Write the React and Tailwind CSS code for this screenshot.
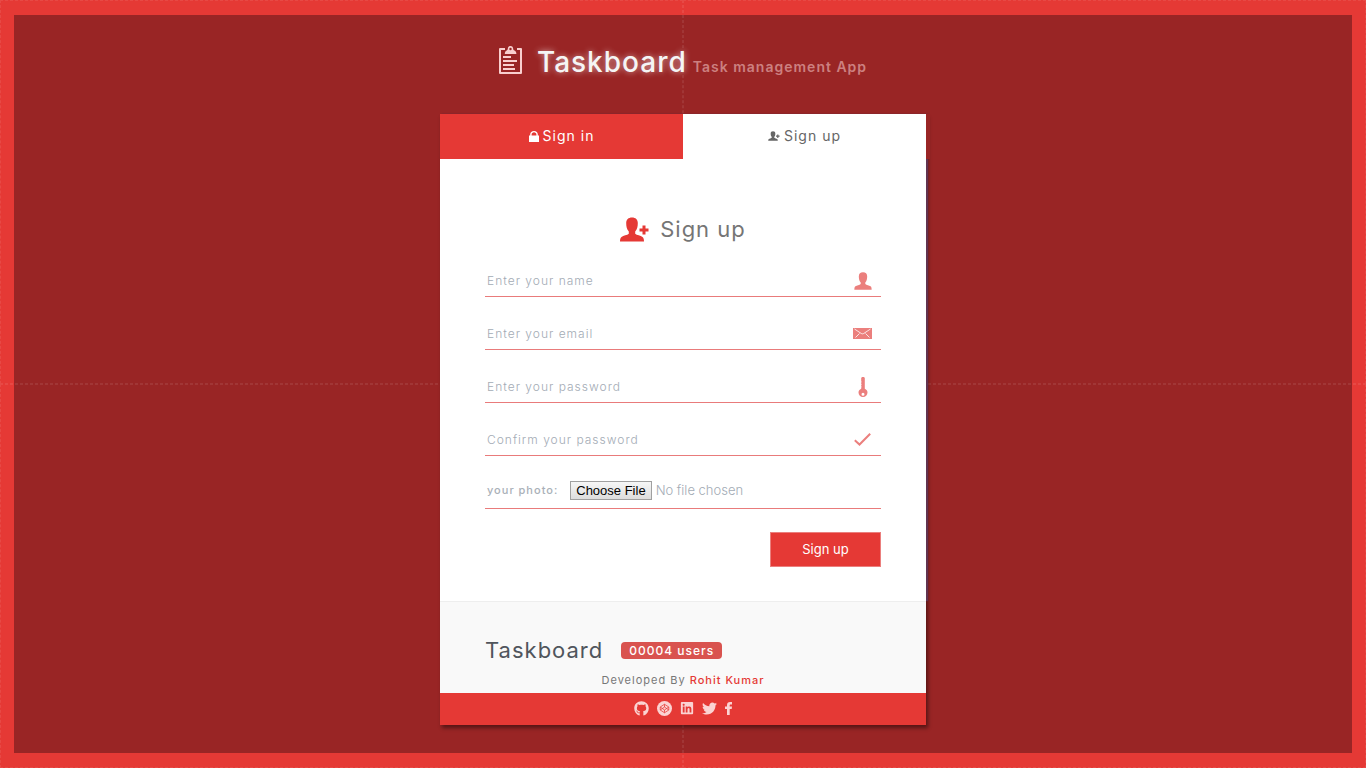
import { useState } from "react";
import { FaGithub, FaLinkedin, FaTwitter } from "react-icons/fa";

const personPath =
  "M12 .5C8.3.5 6.2 2.7 6.2 6c0 3.5.6 6.5 2.6 8.6v2.1c-1.5 1.4-5.5 1.8-7.3 3.2C.4 20.8 0 22.2 0 24.5h24c0-2.3-.4-3.7-1.5-4.6-1.8-1.4-5.8-1.8-7.3-3.2v-2.1c2-2.1 2.6-5.1 2.6-8.6 0-3.3-2.1-5.5-5.8-5.5z";

function PersonIcon({ className }) {
  return (
    <svg viewBox="0 0 24 25" className={className} fill="currentColor" aria-hidden="true">
      <path d={personPath} />
    </svg>
  );
}

function PersonAddIcon({ className }) {
  return (
    <svg viewBox="0 0 29 25" className={className} fill="currentColor" aria-hidden="true">
      <path d={personPath} />
      <path d="M22.5 8.5h3v3h3v3h-3v3h-3v-3h-3v-3h3z" />
    </svg>
  );
}

function LockIcon({ className }) {
  return (
    <svg viewBox="0 0 10 11" className={className} fill="currentColor" aria-hidden="true">
      <path d="M0 4.5h1.2V3.6C1.2 1.4 2.8 0 5 0s3.8 1.4 3.8 3.6v.9H10V11H0zM2.6 4.5h4.8v-.9c0-1.4-1-2.3-2.4-2.3s-2.4.9-2.4 2.3z" />
    </svg>
  );
}

function ClipboardIcon({ className }) {
  return (
    <svg viewBox="0 0 24 28" className={className} aria-hidden="true">
      <path d="M6 3H1v24h21V3h-4" fill="none" stroke="currentColor" strokeWidth="2" strokeLinejoin="round" />
      <path
        d="M11.500 0c-1.700 0-2.700 1.200-2.700 3 0 .7-.4 1.100-1.100 1.400C6.500 4.900 5.800 5.800 5.800 8h11.600c0-2.200-.8-3.100-1.900-3.600-.9-.3-1.300-.7-1.300-1.400 0-1.800-1-3-2.700-3zm0 1.800a1.200 1.200 0 1 1 0 2.400 1.200 1.200 0 0 1 0-2.400z"
        fill="currentColor"
        fillRule="evenodd"
      />
      <path d="M4 11h8M4 15h14M4 19h11M4 23h12" stroke="currentColor" strokeWidth="2" />
    </svg>
  );
}

function MailIcon({ className }) {
  return (
    <svg viewBox="0 0 19 11" className={className} aria-hidden="true">
      <path d="M0 0h19v11H0z" fill="currentColor" />
      <path d="M1.500 1l6.800 4.500q1.200.7 2.400 0L17.500 1M2.500 9.500l4-4M16.500 9.500l-4-4" fill="none" stroke="#fff" strokeWidth=".8" />
    </svg>
  );
}

function KeyIcon({ className }) {
  return (
    <svg viewBox="0 0 10 20" className={className} fill="currentColor" aria-hidden="true">
      <path
        fillRule="evenodd"
        d="M4 0h2l.8 1v10.800C8.500 12.500 9.500 13.800 9.500 15.500 9.500 18 7.500 20 5 20S.5 18 .5 15.500c0-1.700 1-3 2.700-3.700v-1.300l.5-.5-.5-.7V8l.5-.5-.5-.7V5.500l.5-.5-.5-.7V1zM5 15.800a1.500 1.500 0 1 0 0 3 1.500 1.500 0 0 0 0-3z"
      />
    </svg>
  );
}

function CheckIcon({ className }) {
  return (
    <svg viewBox="0 0 17 13" className={className} aria-hidden="true">
      <path d="M.8 7.300l4.700 4.200L16.200.8" fill="none" stroke="currentColor" strokeWidth="2" />
    </svg>
  );
}

function CodepenIcon({ className }) {
  return (
    <svg viewBox="0 0 30 30" className={className} aria-hidden="true">
      <circle cx="15" cy="15" r="15" fill="currentColor" />
      <path
        d="M15 6.500l8.500 5.500v6L15 23.500 6.500 18v-6zM15 6.500V12M15 18v5.500M6.500 12l8.500 6 8.500-6M6.500 18l8.500-6 8.500 6"
        fill="none"
        stroke="#e53935"
        strokeWidth="1.500"
        strokeLinejoin="round"
      />
    </svg>
  );
}

function FacebookIcon({ className }) {
  return (
    <svg viewBox="0 0 7 13" className={className} fill="currentColor" aria-hidden="true">
      <path d="M2 13V7H0V4.500h2V3.200C2 1.100 3.100 0 5.100 0H7v2.400H5.700c-.8 0-1 .3-1 1v1.100H7L6.700 7h-2v6z" />
    </svg>
  );
}

const fields = [
  { id: "name", type: "text", hint: "Enter your name", Icon: PersonIcon, size: "h-[18px] w-[18px]" },
  { id: "email", type: "email", hint: "Enter your email", Icon: MailIcon, size: "h-[11px] w-[19px]" },
  { id: "password", type: "password", hint: "Enter your password", Icon: KeyIcon, size: "h-5 w-[10px]" },
  { id: "confirm", type: "password", hint: "Confirm your password", Icon: CheckIcon, size: "h-[13px] w-[17px]" },
];

const links = [
  { label: "GitHub", Icon: FaGithub, size: "size-[15px]" },
  { label: "CodePen", Icon: CodepenIcon, size: "size-[15px]" },
  { label: "LinkedIn", Icon: FaLinkedin, size: "size-[14px]" },
  { label: "Twitter", Icon: FaTwitter, size: "size-[15px]" },
  { label: "Facebook", Icon: FacebookIcon, size: "h-[13px] w-[7px]" },
];

export default function App() {
  const [tab, setTab] = useState("up");
  const tabStyle = (name) =>
    "flex h-[45px] items-center justify-center gap-1 pb-0.5 text-sm tracking-[1px] " +
    (tab === name ? "bg-white text-[#666]" : "bg-[#e53935] text-white");

  return (
    <div className="relative flex min-h-screen bg-[#e53935] px-[14px] py-[15px] font-['Inter','Liberation_Sans',sans-serif]">
      <div className="pointer-events-none absolute inset-0 grid grid-cols-2 grid-rows-2" aria-hidden="true">
        <div className="z-10 border border-dashed border-white/8" />
        <div className="z-10 border border-dashed border-white/8" />
        <div className="z-10 border border-dashed border-white/8" />
        <div className="z-10 border border-dashed border-white/8" />
      </div>
      <div className="flex flex-1 flex-col items-center bg-[#992525] pb-7">
        <header className="relative z-20 flex items-start gap-[14px] pt-[27px] pb-[32px]">
          <ClipboardIcon className="mt-1 h-7 w-6 text-[#f9cfce]" />
          <h1 className="flex items-baseline gap-1.5 text-[28px] leading-10 font-medium tracking-[1px] text-[#f5f5f5]">
            <span className="[text-shadow:0_0_6px_rgba(255,255,255,0.6)]">Taskboard</span>
            <small className="text-sm font-semibold text-[#cc8080]">Task management App</small>
          </h1>
        </header>

        <main className="relative z-20 w-full max-w-[486px]">
          <div className="shadow-[2px_3px_4px_rgba(0,0,0,0.45)]">
            <div className="relative shadow-[2px_0_1px_#623350]">
              <nav className="relative grid grid-cols-2 shadow-[4px_0_0_#992525]">
                <button type="button" onClick={() => setTab("in")} className={tabStyle("in")}>
                  <LockIcon className="mt-0.5 h-[11px] w-[10px]" />
                  Sign in
                </button>
                <button type="button" onClick={() => setTab("up")} className={tabStyle("up")}>
                  <PersonAddIcon className="h-[10px] w-3" />
                  Sign up
                </button>
              </nav>

              <form className="bg-white px-[45px] pt-[52px] pb-[34px]" onSubmit={(e) => e.preventDefault()}>
                <h2 className="mb-[14px] flex h-9 items-center justify-center gap-[11px] text-[22px] tracking-[1px] text-[#757575]">
                  <PersonAddIcon className="h-[25px] w-[29px] text-[#e53935]" />
                  Sign up
                </h2>
                <div className="flex flex-col gap-[17px]">
                  {fields.map(({ id, type, hint, Icon, size }) => (
                    <div key={id} className="flex h-9 items-center border-b border-[#e97b7b] pt-1">
                      <input
                        id={id}
                        type={type}
                        placeholder={hint}
                        aria-label={hint}
                        className="min-w-0 flex-1 px-0.5 text-xs tracking-[1px] text-gray-600 outline-none placeholder:font-light placeholder:text-[#a3abb5]"
                      />
                      <label htmlFor={id} className="flex w-[37px] justify-center text-[#eb7f7d]">
                        <Icon className={size} />
                      </label>
                    </div>
                  ))}
                  <div className="flex h-9 items-center gap-3 border-b border-[#e97b7b] px-0.5">
                    <label htmlFor="photo" className="text-[11px] font-medium tracking-[1px] text-[#a9b0b8]">
                      your photo:
                    </label>
                    <input
                      id="photo"
                      type="file"
                      className="min-w-0 flex-1 text-[13px] font-light text-[#a3abb5] file:mr-1 file:h-[19px] file:border file:border-solid file:border-[#a0a0a0] file:bg-linear-to-b file:from-[#f6f6f6] file:to-[#dddddd] file:px-[5px] file:font-['Liberation_Sans',sans-serif] file:text-[13px] file:leading-4 file:font-normal file:text-black"
                    />
                  </div>
                </div>
                <div className="mt-[23px] flex justify-end">
                  <button
                    type="submit"
                    className="h-[35px] w-[111px] border border-[#eb7f7d] bg-[#e53935] text-[13px] text-white"
                  >
                    Sign up
                  </button>
                </div>
              </form>
            </div>

            <footer className="relative">
              <div className="border-t border-[#eeeeee] bg-[#f9f9f9] px-[45px] pt-8 pb-[5px]">
                <div className="flex h-8 items-center gap-[18px]">
                  <h3 className="text-[22px] tracking-[1px] text-[#50555c]">Taskboard</h3>
                  <span className="rounded bg-[#d9534f] px-2 text-xs leading-[17px] font-medium tracking-[1px] text-white">
                    00004 users
                  </span>
                </div>
                <p className="mt-1.5 text-center text-[11px] leading-4 tracking-[1px] text-[#777]">
                  Developed By{" "}
                  <a href="#author" className="font-medium text-[#e53935]">
                    Rohit Kumar
                  </a>
                </p>
              </div>
              <div className="flex h-8 items-center justify-center gap-2 bg-[#e53935] pb-0.5 text-[#fbd3d2]">
                {links.map(({ label, Icon, size }) => (
                  <a key={label} href={"#" + label} aria-label={label}>
                    <Icon className={size} />
                  </a>
                ))}
              </div>
            </footer>
          </div>
        </main>
      </div>
    </div>
  );
}
